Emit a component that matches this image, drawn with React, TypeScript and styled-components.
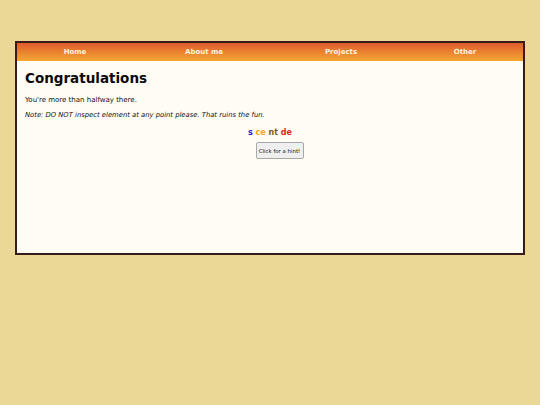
import React from 'react';
import styled, { createGlobalStyle } from 'styled-components';

const GlobalStyle = createGlobalStyle`
  html, body {
    margin: 0;
    padding: 0;
    background: #ecd896;
  }
  body {
    font-family: "DejaVu Sans", Verdana, sans-serif;
    color: #111;
  }
`;

const Page = styled.div`
  width: 540px;
  height: 405px;
  padding: 41px 15px 0;
  box-sizing: border-box;
`;

const Card = styled.main`
  width: 510px;
  height: 214px;
  box-sizing: border-box;
  border: 2px solid #3b1a1c;
  background: #fffcf4;
  display: flex;
  flex-direction: column;
`;

const NavBar = styled.nav`
  display: grid;
  grid-template-columns: 116px 142px 132px 116px;
  height: 18px;
  background: linear-gradient(to bottom, #df5a2c 0%, #ec8a30 60%, #f5a634 100%);
`;

const NavLink = styled.a`
  display: flex;
  align-items: center;
  justify-content: center;
  color: #fff3dc;
  font-size: 7px;
  font-weight: bold;
  text-decoration: none;
`;

const Content = styled.section`
  padding: 8px 8px 0;
  display: flex;
  flex-direction: column;
`;

const Title = styled.h1`
  margin: 0 0 9px;
  font-size: 13.5px;
  line-height: 18px;
  font-weight: bold;
  color: #0a0a0a;
`;

const Para = styled.p<{ $italic?: boolean }>`
  margin: 0 0 6px;
  font-size: ${(p) => (p.$italic ? '6.8px' : '7px')};
  line-height: 9px;
  font-style: ${(p) => (p.$italic ? 'italic' : 'normal')};
`;

const Scramble = styled.div`
  margin-top: 1px;
  text-align: center;
  font-size: 8px;
  font-weight: bold;
  line-height: 11px;
`;

const Piece = styled.span<{ $color: string }>`
  color: ${(p) => p.$color};
`;

const HintRow = styled.div`
  display: flex;
  justify-content: center;
  margin-top: 4px;
`;

const HintButton = styled.button`
  width: 48px;
  height: 17px;
  padding: 0;
  font-family: "DejaVu Sans", Verdana, sans-serif;
  font-size: 5.4px;
  color: #111;
  background: #efefef;
  border: 1px solid #a8a8a8;
  border-radius: 2px;
  margin-left: 19px;
`;

const links = ['Home', 'About me', 'Projects', 'Other'];

const pieces: [string, string][] = [
  ['s', '#2a1fd0'],
  ['ce', '#f0a424'],
  ['nt', '#7a5a1e'],
  ['de', '#e21d1d'],
];

export default function App() {
  return (
    <>
      <GlobalStyle />
      <Page>
        <Card>
          <NavBar>
            {links.map((l) => (
              <NavLink key={l} href="#">
                {l}
              </NavLink>
            ))}
          </NavBar>
          <Content>
            <Title>Congratulations</Title>
            <Para>You're more than halfway there.</Para>
            <Para $italic>Note: DO NOT inspect element at any point please. That ruins the fun.</Para>
            <Scramble>
              {pieces.map(([t, c], i) => (
                <React.Fragment key={i}>
                  {i > 0 && ' '}
                  <Piece $color={c}>{t}</Piece>
                </React.Fragment>
              ))}
            </Scramble>
            <HintRow>
              <HintButton type="button">Click for a hint!</HintButton>
            </HintRow>
          </Content>
        </Card>
      </Page>
    </>
  );
}
